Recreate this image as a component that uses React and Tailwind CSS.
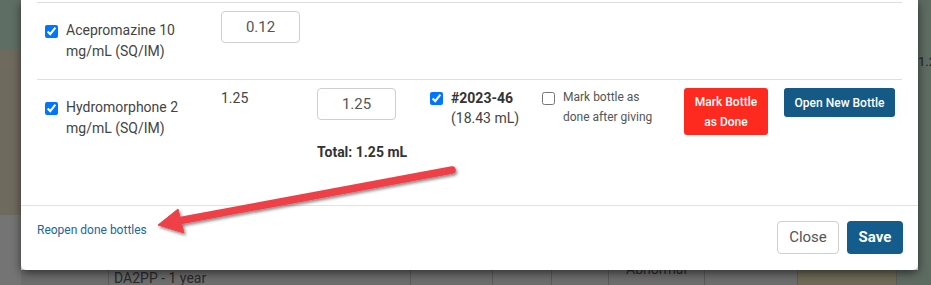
// Bottle dose modal over a dimmed table page, with a red callout arrow
import React from 'react';

const Check = ({ checked }) => (
  <input
    type="checkbox"
    defaultChecked={checked}
    className="w-[13px] h-[13px] shrink-0 accent-[#0075ff]"
  />
);

const DoseInput = ({ value }) => (
  <input
    defaultValue={value}
    className="w-[79px] h-[32px] border border-[#cfcfcf] rounded-[4px] text-center text-[15px] text-[#555] outline-none"
  />
);

const Arrow = () => (
  <svg
    className="absolute left-0 top-0 z-20 pointer-events-none"
    width="931"
    height="285"
    viewBox="0 0 931 285"
  >
    <defs>
      <filter id="sh" x="-10%" y="-50%" width="120%" height="200%">
        <feDropShadow dx="1.5" dy="2" stdDeviation="1.6" floodColor="#000" floodOpacity="0.45" />
      </filter>
    </defs>
    <g filter="url(#sh)" fill="#ef4046" stroke="#ef4046">
      <line x1="452" y1="170" x2="178" y2="221" strokeWidth="7.5" strokeLinecap="round" />
      <polygon points="158,225 178,209 184,233" strokeWidth="1" strokeLinejoin="round" />
    </g>
  </svg>
);

const cells = [
  { w: 'w-[87px]', bg: 'bg-[#6d6d6d]' },
  { w: 'w-[302px]', bg: 'bg-[#6d6d6d]', text: 'DA2PP - 1 year', cls: 'pl-[5px]' },
  { w: 'w-[82px]', bg: 'bg-[#6d6d6d]' },
  { w: 'w-[59px]', bg: 'bg-[#6d6d6d]' },
  { w: 'w-[57px]', bg: 'bg-[#6d6d6d]' },
  { w: 'w-[96px]', bg: 'bg-[#6d6d6d]', text: 'Abnormal', cls: 'text-center -mt-[9px]' },
  { w: 'w-[93px]', bg: 'bg-[#6d6d6d]' },
  { w: 'w-[99px]', bg: 'bg-[#6e6a57]' },
  { w: 'flex-1', bg: 'bg-[#5f6b60]' },
];

export default function App() {
  return (
    <div className="relative w-[931px] h-[285px] overflow-hidden flex font-['Roboto',sans-serif] text-[#444]">
      {/* page behind the backdrop, left edge */}
      <div className="w-[21px] shrink-0 flex flex-col">
        <div className="h-[50px] bg-[#5f6e64]" />
        <div className="h-[165px] bg-[#6f6a5e]" />
        <div className="flex-1 bg-[#747474]" />
      </div>

      <div className="w-[897px] shrink-0 flex flex-col">
        <div className="relative z-10 h-[270px] bg-white rounded-b-[5px] shadow-[0_3px_10px_rgba(0,0,0,0.55)] flex flex-col">
          <div className="flex-1 px-[16px] pt-[2px]">
            {/* row 1 */}
            <div className="border-t border-[#dedede] pl-[8px] pt-[8px] pb-[17px] grid grid-cols-[176px_96px_1fr]">
              <div className="flex items-start gap-[8px] mt-[9px] text-[14px] leading-[21px]">
                <span className="mt-[5px] flex"><Check checked /></span>
                <span>Acepromazine 10<br />mg/mL (SQ/IM)</span>
              </div>
              <div><DoseInput value="0.12" /></div>
              <div />
            </div>

            {/* row 2 */}
            <div className="border-t border-[#dedede] pl-[8px] pt-[8px] pb-[43px] grid grid-cols-[176px_96px_113px_112px_142px_100px_1fr]">
              <div className="flex items-start gap-[8px] mt-[9px] text-[14px] leading-[21px]">
                <span className="mt-[5px] flex"><Check checked /></span>
                <span>Hydromorphone 2<br />mg/mL (SQ/IM)</span>
              </div>
              <div className="text-[14px] leading-[20px]">1.25</div>
              <div className="flex flex-col">
                <DoseInput value="1.25" />
                <div className="mt-[22px] text-[14px] leading-[20px] font-bold text-[#333]">Total: 1.25 mL</div>
              </div>
              <div className="flex items-start gap-[8px] text-[14px] leading-[20px]">
                <span className="mt-[4px] flex"><Check checked /></span>
                <span>
                  <span className="font-bold text-[#333]">#2023-46</span>
                  <br />
                  (18.43 mL)
                </span>
              </div>
              <div className="flex items-start gap-[8px] text-[12px] leading-[20px] text-[#555]">
                <span className="mt-[4px] flex"><Check /></span>
                <span className="-mt-[1px]">Mark bottle as<br />done after giving</span>
              </div>
              <div>
                <button className="w-[84px] h-[47px] rounded-[3px] bg-[#fe2a20] text-white text-[12px] leading-[20px] font-medium">
                  Mark Bottle<br />as Done
                </button>
              </div>
              <div>
                <button className="w-[111px] h-[29px] rounded-[3px] bg-[#155a87] text-white text-[12px] font-medium">
                  Open New Bottle
                </button>
              </div>
            </div>
          </div>

          {/* footer */}
          <div className="border-t border-[#e2e2e2] pt-[15px] pb-[16px] pl-[16px] pr-[15px] flex items-start justify-between">
            <a className="text-[12px] leading-[18px] text-[#22669a] cursor-pointer">Reopen done bottles</a>
            <div className="flex gap-[8px]">
              <button className="h-[33px] w-[62px] border border-[#cfcfcf] rounded-[4px] text-[15px] text-[#555] bg-white">Close</button>
              <button className="h-[33px] w-[56px] rounded-[4px] text-[15px] font-bold text-white bg-[#135c8b]">Save</button>
            </div>
          </div>
        </div>

        {/* table row behind the backdrop */}
        <div className="flex-1 flex text-[14px] text-[#2a2a2a]">
          {cells.map((c, i) => (
            <div key={i} className={`${c.w} ${c.bg} ${i > 0 ? 'border-l border-[#5a5a5a]' : ''} ${c.cls || ''} leading-[16px] whitespace-nowrap`}>
              {c.text}
            </div>
          ))}
        </div>
      </div>

      {/* page behind the backdrop, right edge */}
      <div className="flex-1 min-w-0 overflow-hidden bg-[#5d6b61] flex flex-col">
        <div className="mt-[54px] text-[13px] text-[#222] leading-[16px] whitespace-nowrap">1.2</div>
      </div>

      <Arrow />
    </div>
  );
}
